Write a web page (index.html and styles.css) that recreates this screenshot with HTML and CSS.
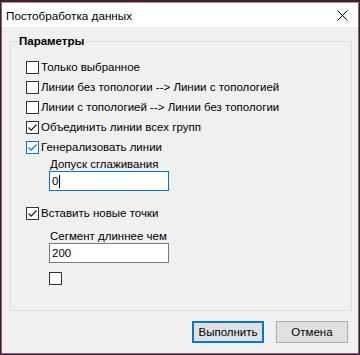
FILE: index.html
```html
<!DOCTYPE html>
<html>
<head>
<meta charset="utf-8">
<link rel="stylesheet" href="styles.css">
</head>
<body>
<div class="window">
  <div class="titlebar">
    <span class="title">Постобработка данных</span>
    <svg class="close" width="11" height="11" viewBox="0 0 11 11"><path d="M0.5 0.5 L10.5 10.5 M10.5 0.5 L0.5 10.5" stroke="#000" stroke-width="1" fill="none"/></svg>
  </div>
  <div class="content">
    <div class="group">
      <span class="legend">Параметры</span>
      <div class="row"><span class="cb"></span><span class="lbl">Только выбранное</span></div>
      <div class="row"><span class="cb"></span><span class="lbl">Линии без топологии --&gt; Линии с топологией</span></div>
      <div class="row"><span class="cb"></span><span class="lbl">Линии с топологией --&gt; Линии без топологии</span></div>
      <div class="row"><span class="cb"><svg width="11" height="11" viewBox="0 0 11 11"><path d="M1.5 5.5 L4.2 8.2 L9.5 2.5" stroke="#222" stroke-width="1.2" fill="none"/></svg></span><span class="lbl">Объединить линии всех групп</span></div>
      <div class="row"><span class="cb focus"><svg width="11" height="11" viewBox="0 0 11 11"><path d="M1.5 5.5 L4.2 8.2 L9.5 2.5" stroke="#0078d7" stroke-width="1.2" fill="none"/></svg></span><span class="lbl">Генерализовать линии</span></div>
      <div class="sub">
        <div class="fieldlabel">Допуск сглаживания</div>
        <div class="input active">0<span class="caret"></span></div>
      </div>
      <div class="row row-gap"><span class="cb"><svg width="11" height="11" viewBox="0 0 11 11"><path d="M1.5 5.5 L4.2 8.2 L9.5 2.5" stroke="#222" stroke-width="1.2" fill="none"/></svg></span><span class="lbl">Вставить новые точки</span></div>
      <div class="sub">
        <div class="fieldlabel fl2">Сегмент длиннее чем</div>
        <div class="input">200</div>
        <span class="cb single"></span>
      </div>
    </div>
    <div class="buttons">
      <div class="btn default">Выполнить</div>
      <div class="btn">Отмена</div>
    </div>
  </div>
</div>
</body>
</html>
```

FILE: styles.css
```css
html, body {
  margin: 0;
  padding: 0;
}
body {
  width: 360px;
  height: 355px;
  background: #4a1a33;
  font-family: "Liberation Sans", Arial, sans-serif;
  font-size: 11.5px;
  color: #000;
  overflow: hidden;
}
.window {
  margin: 2px 0 0 1px;
  width: 356px;
  height: 350px;
  border: 1px solid #6e6e6e;
  border-top-color: #9a9a9a;
  background: #f0f0f0;
  display: flex;
  flex-direction: column;
}
.titlebar {
  height: 24px;
  background: #fff;
  display: flex;
  align-items: center;
  justify-content: space-between;
  padding: 0 10px 0 4px;
}
.title {
  font-size: 11.7px;
  line-height: 16px;
  margin-top: 1px;
}
.close {
  display: block;
}
.content {
  display: flex;
  flex-direction: column;
  padding: 14px 6px 0 8px;
}
.group {
  position: relative;
  border: 1px solid #dcdcdc;
  height: 270px;
  padding: 15px 0 0 15px;
  box-sizing: border-box;
  display: flex;
  flex-direction: column;
}
.legend {
  position: absolute;
  top: -9px;
  left: 6px;
  padding: 0 2px;
  background: #f0f0f0;
  font-weight: bold;
  line-height: 16px;
}
.row {
  height: 20px;
  display: flex;
  align-items: center;
}
.row-gap {
  margin-top: 12px;
}
.cb {
  width: 11px;
  height: 11px;
  border: 1px solid #333;
  background: #fff;
  display: flex;
  flex: none;
  align-items: center;
  justify-content: center;
}
.cb.focus {
  border-color: #0078d7;
}
.lbl {
  margin-left: 2px;
  line-height: 16px;
  white-space: nowrap;
}
.sub {
  display: flex;
  flex-direction: column;
  padding-left: 23px;
}
.fieldlabel {
  line-height: 14px;
  padding-left: 1px;
}
.fl2 {
  margin-top: 6px;
}
.input {
  height: 18px;
  border: 1px solid #7a7a7a;
  background: #fff;
  line-height: 18px;
  padding-left: 2px;
  box-sizing: content-box;
  display: flex;
  align-items: center;
  width: 116px;
}
.input.active {
  border-color: #0078d7;
}
.caret {
  width: 1px;
  height: 13px;
  background: #000;
  margin-left: 1px;
}
.cb.single {
  margin-top: 9px;
}
.buttons {
  display: flex;
  justify-content: flex-end;
  gap: 12px;
  margin-top: 10px;
  padding-right: 4px;
}
.btn {
  width: 70px;
  height: 20px;
  border: 1px solid #adadad;
  background: #e1e1e1;
  display: flex;
  align-items: center;
  justify-content: center;
  line-height: 16px;
}
.btn.default {
  border: 2px solid #0078d7;
  width: 68px;
  height: 18px;
}
```
